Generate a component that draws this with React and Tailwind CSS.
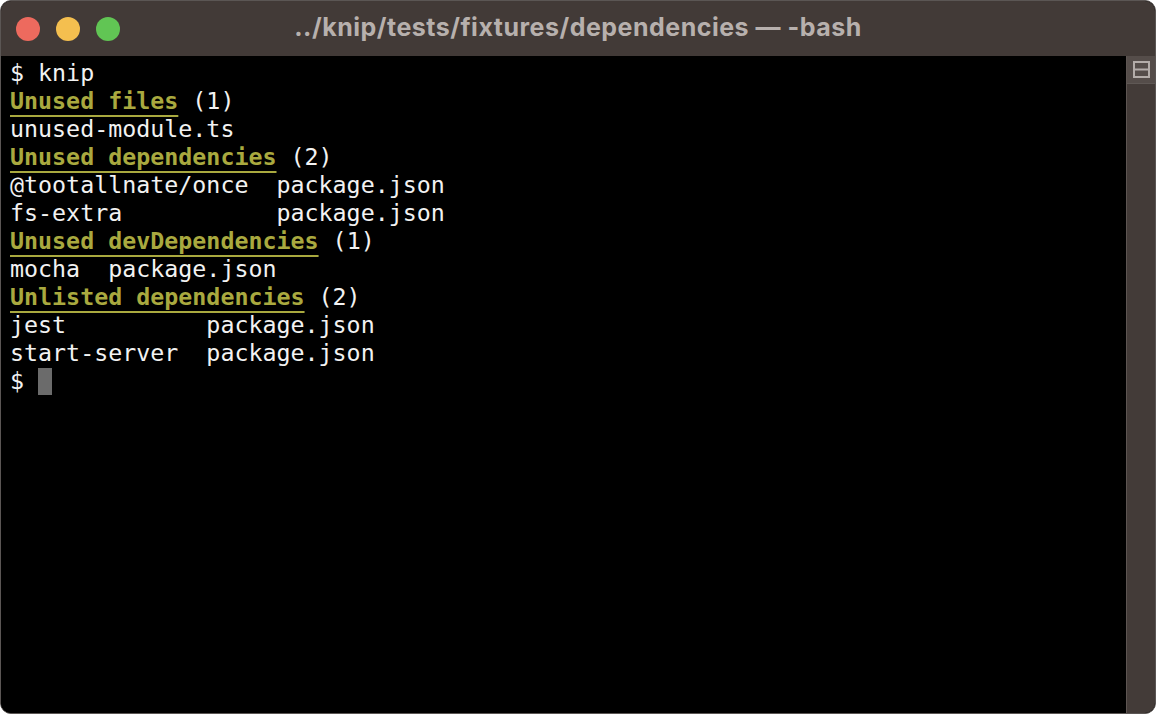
import React from "react";

const mono = { fontFamily: '"DejaVu Sans Mono", "Liberation Mono", monospace' };

const lines = [
  [{ t: "$ knip" }],
  [{ t: "Unused files", h: true }, { t: " (1)" }],
  [{ t: "unused-module.ts" }],
  [{ t: "Unused dependencies", h: true }, { t: " (2)" }],
  [{ t: "@tootallnate/once  package.json" }],
  [{ t: "fs-extra           package.json" }],
  [{ t: "Unused devDependencies", h: true }, { t: " (1)" }],
  [{ t: "mocha  package.json" }],
  [{ t: "Unlisted dependencies", h: true }, { t: " (2)" }],
  [{ t: "jest          package.json" }],
  [{ t: "start-server  package.json" }],
];

const Light = ({ color }) => (
  <span className={`block w-[24px] h-[24px] rounded-full ${color}`} />
);

const App = () => {
  return (
    <div className="w-full h-[714px] bg-white">
      <div className="h-full rounded-[11px] overflow-hidden flex flex-col border border-[#5b5654] bg-black">
        <div className="h-[55px] shrink-0 bg-[#423a37] grid grid-cols-[1fr_auto_1fr] items-center">
          <div className="flex items-center gap-[16px] pl-[15px]">
            <Light color="bg-[#ed6a5e]" />
            <Light color="bg-[#f4bf4f]" />
            <Light color="bg-[#61c554]" />
          </div>
          <div
            className="text-[#b7b0ad] text-[25px] font-bold tracking-[0.5px] pb-[1px]"
            style={{ fontFamily: '"Inter", "Liberation Sans", sans-serif' }}
          >
            ../knip/tests/fixtures/dependencies — -bash
          </div>
          <div />
        </div>
        <div className="flex-1 flex min-h-0">
          <div
            className="flex-1 bg-black pl-[9px] pt-[3px] text-[23.3px] leading-[28px] text-[#f2f2f2] whitespace-pre"
            style={mono}
          >
            {lines.map((l, i) => (
              <div key={i} className="h-[28px]">
                {l.map((s, j) =>
                  s.h ? (
                    <span
                      key={j}
                      className="font-bold text-[#a9a93f] underline decoration-2 underline-offset-[6px]"
                    >
                      {s.t}
                    </span>
                  ) : (
                    <span key={j}>{s.t}</span>
                  )
                )}
              </div>
            ))}
            <div className="h-[28px] flex items-center">
              <span>$ </span>
              <span className="inline-block w-[14px] h-[27px] bg-[#6b6b6b]" />
            </div>
          </div>
          <div className="w-[29px] shrink-0 bg-[#433b38] border-l border-[#5d5552] flex flex-col">
            <div className="h-[28px] bg-[#554d4a] border-b border-[#5f5855] flex items-center justify-center">
              <svg width="17" height="17" viewBox="0 0 17 17">
                <rect x="1" y="1" width="15" height="15" fill="none" stroke="#b3aca9" strokeWidth="2" />
                <line x1="1" y1="8.5" x2="16" y2="8.5" stroke="#b3aca9" strokeWidth="2" />
              </svg>
            </div>
          </div>
        </div>
      </div>
    </div>
  );
};

export default App;
